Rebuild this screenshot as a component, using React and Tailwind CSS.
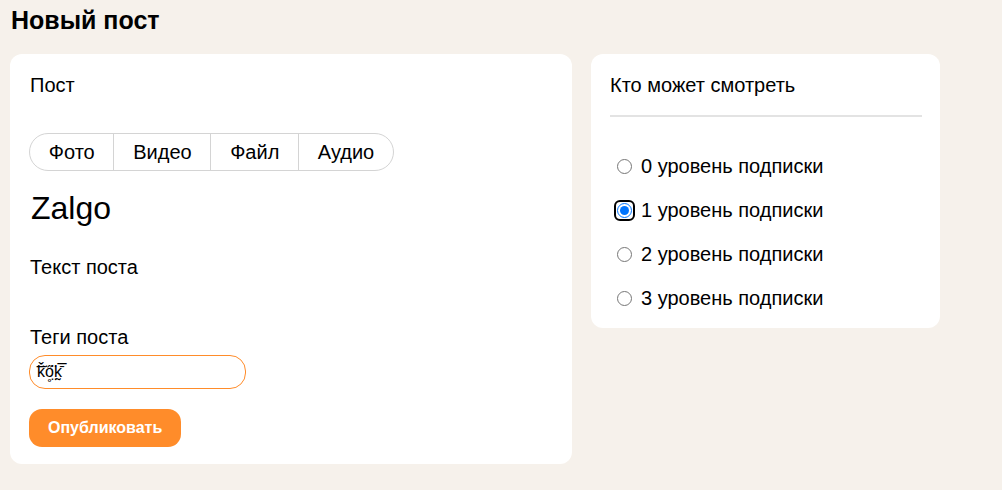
import React, { useState } from "react";

const tabs = ["Фото", "Видео", "Файл", "Аудио"];
const levels = [0, 1, 2, 3];

export default function App() {
  const [level, setLevel] = useState(1);

  return (
    <div
      className="min-h-[490px] w-full bg-[#f6f1eb] text-black"
      style={{ fontFamily: '"Liberation Sans", Arial, sans-serif' }}
    >
      <h1 className="pl-[11px] pt-[6px] text-[25px] leading-[28px] font-bold">Новый пост</h1>

      <div className="mt-[20px] flex items-start gap-[19px] pl-[10px]">
        {/* Left: post editor */}
        <div className="w-[562px] rounded-[12px] bg-white px-[19px] pt-[20px] pb-[17px]">
          <div className="pl-[1px] text-[20px] leading-[23px]">Пост</div>

          <div className="mt-[36px] flex h-[38px] w-fit items-center rounded-[19px] border border-[#d4d4d4]">
            {tabs.map((t, i) => (
              <div
                key={t}
                className={`flex h-full items-center px-[18.75px] text-[20px] leading-[23px] ${i > 0 ? "border-l border-[#d4d4d4]" : ""}`}
              >
                {t}
              </div>
            ))}
          </div>

          <div className="mt-[19px] pl-[2px] text-[32px] leading-[37px]">Zalgo</div>

          <div className="mt-[29px] pl-[1px] text-[20px] leading-[23px]">Текст поста</div>

          <div className="mt-[47px] pl-[1px] text-[20px] leading-[23px]">Теги поста</div>

          <div className="mt-[6px] flex h-[34px] w-[217px] items-center rounded-[16px] border border-[#ff8c2a] px-[7px] text-[16px] leading-[18px]">
            ǩ̅̈ő̥̤̈k̰̅̄
          </div>

          <button className="mt-[20px] h-[38px] rounded-[13px] bg-[#ff8c2a] px-[19px] text-[16px] font-bold text-white">
            Опубликовать
          </button>
        </div>

        {/* Right: visibility */}
        <div className="w-[349px] rounded-[12px] bg-white pl-[19px] pr-[18px] pt-[20px] pb-[18px]">
          <div className="text-[20px] leading-[23px]">Кто может смотреть</div>
          <div className="mt-[18px] h-[2px] w-full bg-[#e3e3e3]" />
          <div className="mt-[37px] flex flex-col gap-[20px]">
            {levels.map((l) => (
              <label key={l} className="flex h-[24px] items-center text-[20px] leading-[23px]">
                <span
                  className={`ml-[4px] mr-[6px] flex h-[21px] w-[21px] items-center justify-center rounded-[6px] ${level === l ? "border-2 border-black" : ""}`}
                >
                  <input
                    type="radio"
                    name="level"
                    checked={level === l}
                    onChange={() => setLevel(l)}
                    className="m-0 h-[15px] w-[15px] shrink-0 accent-[#0075ff] outline-none"
                  />
                </span>
                {l} уровень подписки
              </label>
            ))}
          </div>
        </div>
      </div>
    </div>
  );
}
